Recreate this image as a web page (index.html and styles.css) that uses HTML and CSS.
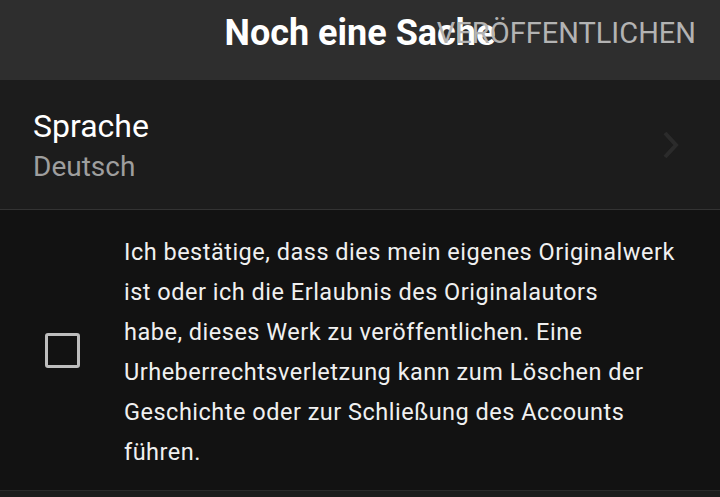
FILE: index.html
```html
<!DOCTYPE html>
<html lang="de">
<head>
    <meta charset="UTF-8">
    <meta name="viewport" content="width=device-width, initial-scale=1.0">
    <title>Noch eine Sache</title>
    <link rel="stylesheet" href="styles.css">
</head>
<body>
    <header class="topbar">
        <h1 class="title">Noch eine Sache</h1>
        <button class="publish">VERÖFFENTLICHEN</button>
    </header>

    <div class="setting-row">
        <div class="setting-text">
            <div class="setting-label">Sprache</div>
            <div class="setting-value">Deutsch</div>
        </div>
        <svg class="chevron" width="18" height="30" viewBox="0 0 18 30">
            <path d="M3 3 L14 15 L3 27" fill="none" stroke="#2b2b2b" stroke-width="4"/>
        </svg>
    </div>

    <div class="confirm">
        <label class="checkbox"><input type="checkbox"><span class="box"></span></label>
        <p class="confirm-text">Ich bestätige, dass dies mein eigenes Originalwerk<br>
            ist oder ich die Erlaubnis des Originalautors<br>
            habe, dieses Werk zu veröffentlichen. Eine<br>
            Urheberrechtsverletzung kann zum Löschen der<br>
            Geschichte oder zur Schließung des Accounts<br>
            führen.</p>
    </div>

    <div class="bottom"></div>
</body>
</html>
```

FILE: styles.css
```css
body {
    margin: 0;
    background: #1c1c1c;
    font-family: Roboto, "Noto Sans", sans-serif;
    color: #f2f2f2;
    overflow: hidden;
}

.topbar {
    position: relative;
    height: 80px;
    background: #2e2e2e;
    display: flex;
    justify-content: center;
}

.title {
    margin: 0;
    padding-top: 12px;
    font-size: 36px;
    font-weight: bold;
    color: #fff;
    line-height: 42px;
}

.publish {
    position: absolute;
    right: 24px;
    top: 12px;
    padding: 0;
    border: none;
    background: none;
    font-family: inherit;
    font-size: 29px;
    line-height: 42px;
    color: #b3b3b3;
}

.setting-row {
    height: 129px;
    display: flex;
    align-items: center;
    justify-content: space-between;
    padding: 0 40px 0 33px;
    border-bottom: 1px solid #333;
}

.setting-text {
    padding-top: 6px;
}

.setting-label {
    font-size: 32px;
    line-height: 38px;
    color: #fff;
}

.setting-value {
    font-size: 28px;
    line-height: 44px;
    color: #9e9e9e;
}

.confirm {
    background: #121212;
    display: flex;
    align-items: center;
    height: 280px;
    border-bottom: 1px solid #2a2a2a;
}

.checkbox {
    width: 124px;
    display: flex;
    justify-content: center;
}

.checkbox input {
    display: none;
}

.checkbox .box {
    width: 29px;
    height: 29px;
    border: 3px solid #bdbdbd;
    border-radius: 3px;
}

.confirm-text {
    margin: 0;
    padding-top: 4px;
    font-size: 23.5px;
    line-height: 40px;
    letter-spacing: 0.5px;
    color: #f0f0f0;
}

.bottom {
    height: 10px;
    background: #1c1c1c;
}
```
